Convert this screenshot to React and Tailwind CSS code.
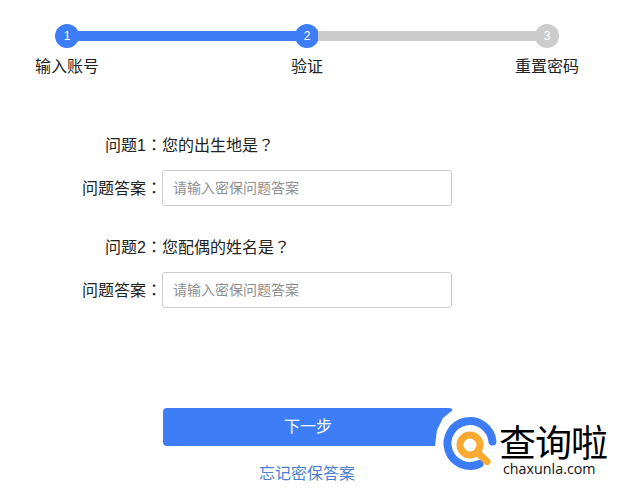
const font = { fontFamily: '"Liberation Sans", "Noto Sans CJK SC", sans-serif' };

function Step({ n, on }) {
  return (
    <div className={`w-6 h-6 shrink-0 rounded-full flex items-center justify-center text-white text-xs ${on ? 'bg-[#3d7ef7]' : 'bg-[#cccccc]'}`}>
      {n}
    </div>
  );
}

function P({ children }) {
  return <span className="font-['Noto_Sans_CJK_TC']">{children}</span>;
}

function Question({ q, text }) {
  return (
    <div className="flex flex-col">
      <div className="flex h-6 items-center text-base text-[#222222]">
        <span className="w-[162px] text-right">{q}<P>：</P></span>
        <span>{text}<P>？</P></span>
      </div>
      <div className="flex items-center mt-[13px]">
        <label className="w-[162px] text-right text-base text-[#222222]">问题答案<P>：</P></label>
        <input
          readOnly
          placeholder="请输入密保问题答案"
          className="w-[290px] h-9 border border-[#cccccc] rounded-[3px] px-[10px] text-sm outline-none placeholder:text-[#8f8f8f]"
        />
      </div>
    </div>
  );
}

function Logo() {
  return (
    <div className="absolute left-[436px] top-[412px] w-[176px] h-[70px]">
      <svg className="absolute left-0 top-0 overflow-visible" width="64" height="70" viewBox="0 0 64 70">
        <polygon points="18,-3 7,6 1,18 -1,34 -1,62 40,62 40,-3" fill="#ffffff" />
        <path d="M56.4 29.5 A22.5 22.5 0 1 0 43.5 51.9" fill="none" stroke="#3c7df6" strokeWidth="8" strokeLinecap="round" />
        <circle cx="34" cy="33" r="10" fill="none" stroke="#f9a92f" strokeWidth="7" />
        <path d="M42 41 L51 49.5" stroke="#f9a92f" strokeWidth="7" strokeLinecap="round" />
      </svg>
      <div className="absolute left-[63px] top-[9px] text-[37px] leading-[40px] text-black whitespace-nowrap tracking-[-1px]" style={{ fontFamily: '"Noto Sans CJK SC", sans-serif' }}>查询啦</div>
      <div className="absolute left-[67px] top-[49px] text-[14.3px] leading-[16px] text-[#111111] whitespace-nowrap" style={{ fontFamily: '"Open Sans", sans-serif' }}>chaxunla.com</div>
    </div>
  );
}

export default function App() {
  return (
    <div className="relative w-[618px] h-[500px] bg-white overflow-hidden pt-6" style={font}>
      <div className="mx-[55px] w-[504px] flex items-center">
        <Step n="1" on />
        <div className="flex-1 h-[10px] -mx-px bg-[#3d7ef7]" />
        <Step n="2" on />
        <div className="flex-1 h-[10px] -mx-px bg-[#cccccc]" />
        <Step n="3" />
      </div>
      <div className="mx-[35px] w-[544px] mt-[7px] flex justify-between text-base leading-6 text-[#222222]">
        <span>输入账号</span>
        <span>验证</span>
        <span>重置密码</span>
      </div>
      <div className="mt-[54px] flex flex-col gap-[29px]">
        <Question q="问题1" text="您的出生地是" />
        <Question q="问题2" text="您配偶的姓名是" />
      </div>
      <button className="block ml-[163px] mt-[100px] w-[290px] h-[38px] rounded-[4px] bg-[#3d7ef7] text-white text-base">下一步</button>
      <a className="block mt-[16px] pr-[4px] text-center text-base leading-6 text-[#4a7fd0]">忘记密保答案</a>
      <Logo />
    </div>
  );
}
